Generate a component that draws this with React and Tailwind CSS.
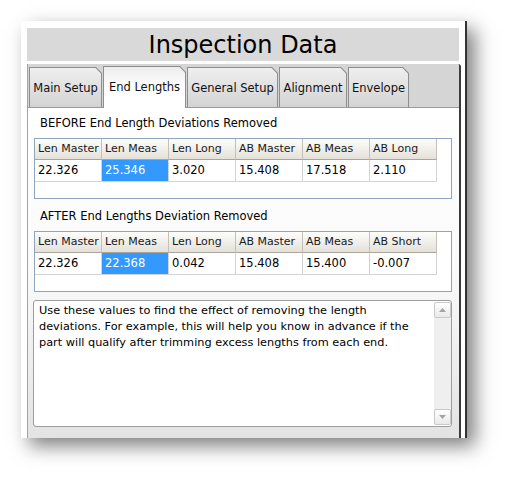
import React from 'react';

const TABS = [
    { label: 'Main Setup', w: 'w-[73px]' },
    { label: 'End Lengths', w: 'w-[83px]', active: true },
    { label: 'General Setup', w: 'w-[91px]' },
    { label: 'Alignment', w: 'w-[68px]' },
    { label: 'Envelope', w: 'w-[61px]' },
];

const BEFORE = {
    cols: ['Len Master', 'Len Meas', 'Len Long', 'AB Master', 'AB Meas', 'AB Long'],
    vals: ['22.326', '25.346', '3.020', '15.408', '17.518', '2.110'],
};

const AFTER = {
    cols: ['Len Master', 'Len Meas', 'Len Long', 'AB Master', 'AB Meas', 'AB Short'],
    vals: ['22.326', '22.368', '0.042', '15.408', '15.400', '-0.007'],
};

const Tab = ({ label, w, active }) => (
    <div
        className={`${w} ${active ? 'h-[42px] -mb-[1px] relative z-10' : 'h-[40px]'} bg-[#8e8e8e] pt-[1px] px-[1px] [clip-path:polygon(0_0,calc(100%_-_6px)_0,100%_6px,100%_100%,0_100%)]`}
    >
        <div
            className={`h-full flex justify-center ${active ? 'items-start pt-[12px] bg-linear-to-b from-[#ececec] via-white to-white' : 'items-center pt-[3px] bg-linear-to-b from-[#efefef] to-[#d3d3d3]'} text-[11.5px] text-[#111] [clip-path:polygon(0_0,calc(100%_-_5.5px)_0,100%_5.5px,100%_100%,0_100%)]`}
        >
            {label}
        </div>
    </div>
);

const DataTable = ({ cols, vals }) => (
    <div className="ml-[6px] w-[418px] h-[61px] border border-[#8fa4bd] bg-white">
        <div className="flex">
            {cols.map(c => (
                <div key={c} className="w-[67px] h-[21px] flex items-center pl-[3px] border-r border-b border-r-[#c4c0b6] border-b-[#a9a59a] bg-linear-to-b from-[#fdfdfc] to-[#e4e1d9] text-[11px] text-[#1a1a1a] whitespace-nowrap">
                    {c}
                </div>
            ))}
        </div>
        <div className="flex">
            {vals.map((v, i) => (
                <div
                    key={i}
                    className={`w-[67px] h-[22px] flex items-center pl-[3px] border-r border-b border-[#d3d3d3] text-[11.5px] ${i === 1 ? 'bg-[#3399ff] text-white' : 'text-black'}`}
                >
                    {v}
                </div>
            ))}
        </div>
    </div>
);

const ScrollBtn = ({ up }) => (
    <div className="w-[17px] h-[16px] rounded-[2px] border border-[#c9c9c9] bg-linear-to-b from-white to-[#e9e9e9] flex items-center justify-center">
        <svg width="7" height="4" viewBox="0 0 7 4">
            <path d={up ? 'M0 4 L3.5 0 L7 4 Z' : 'M0 0 L3.5 4 L7 0 Z'} fill="#a3a3a3" />
        </svg>
    </div>
);

export default function App() {
    return (
        <div className="min-h-screen bg-white pl-[21px] pt-[21px] font-['DejaVu_Sans',sans-serif]">
            <div className="w-[446px] h-[417px] bg-white border-r-2 border-[#333] shadow-[8px_8px_18px_rgba(0,0,0,0.5)] flex flex-col pl-[6px] pt-[7px]">
                {/* Title */}
                <div className="w-[432px] h-[33px] bg-[#d9d9d9] flex items-center justify-center text-[24px] text-black">
                    Inspection Data
                </div>

                {/* Tab control */}
                <div className="mt-[3px] w-[434px] flex-1 flex flex-col border-l border-[#a3a3a3] border-r-2 border-r-[#3a3a3a] rounded-tr-[3px] overflow-hidden">
                    <div className="h-[44px] bg-[#d5d5d5] flex items-end gap-[1px] pl-[1px] border-b border-[#9a9a9a]">
                        {TABS.map(t => <Tab key={t.label} {...t} />)}
                    </div>

                    <div className="flex-1 flex flex-col bg-linear-to-b from-white via-[#fafafa] to-[#e3e3e3]">
                        <div className="mt-[8px] ml-[12px] h-[15px] flex items-center text-[11.5px] text-black">
                            BEFORE End Length Deviations Removed
                        </div>
                        <div className="mt-[7px]">
                            <DataTable {...BEFORE} />
                        </div>

                        <div className="mt-[10px] ml-[12px] h-[15px] flex items-center text-[11.5px] text-black">
                            AFTER End Lengths Deviation Removed
                        </div>
                        <div className="mt-[7px]">
                            <DataTable {...AFTER} />
                        </div>

                        {/* Notes box */}
                        <div className="mt-[8px] ml-[5px] w-[419px] h-[127px] border border-[#9d9d9d] rounded-[3px] bg-white flex">
                            <p className="flex-1 pl-[5px] pt-[2px] pr-[6px] text-[11.3px] leading-[16px] text-black">
                                Use these values to find the effect of removing the length deviations. For example, this will help you know in advance if the part will qualify after trimming excess lengths from each end.
                            </p>
                            <div className="w-[17px] my-[1px] bg-[#efefef] flex flex-col justify-between">
                                <ScrollBtn up />
                                <ScrollBtn />
                            </div>
                        </div>
                    </div>
                </div>
            </div>
        </div>
    );
}
